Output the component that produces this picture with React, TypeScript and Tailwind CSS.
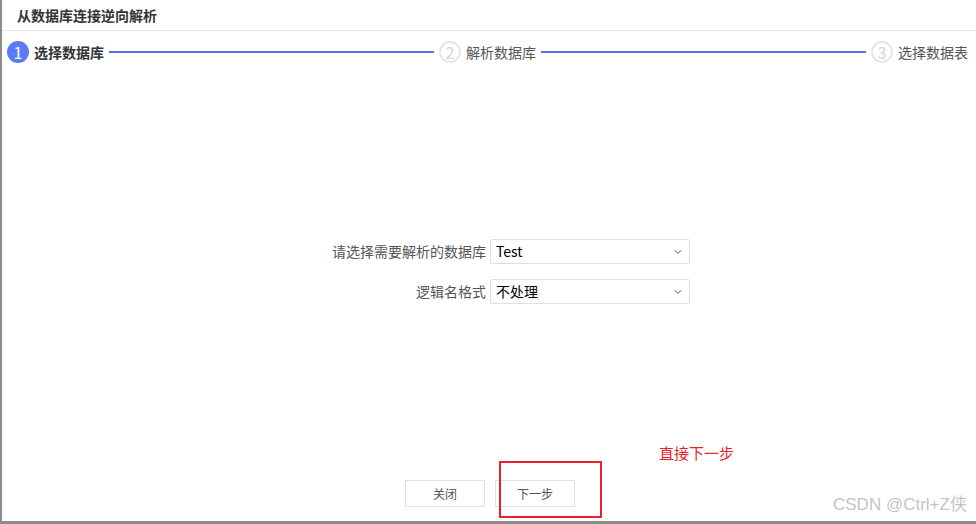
import { ChevronDown } from "lucide-react";

const font = { fontFamily: '"Microsoft YaHei", "Noto Sans CJK SC", "Liberation Sans", sans-serif' };

function Step(props: { n: number; label: string; active?: boolean }) {
  const { n, label, active } = props;
  return (
    <div className="flex items-center gap-[5px] shrink-0">
      <span
        className={
          "flex h-[22px] w-[22px] items-center justify-center rounded-full text-[16px] leading-none " +
          (active ? "bg-[#5a7cf8] text-white" : "border-2 border-[#e3e6ee] bg-white text-[#d2d5dc]")
        }
      >
        {n}
      </span>
      <span className={"text-[14px] " + (active ? "font-bold text-[#333]" : "text-[#555]")}>{label}</span>
    </div>
  );
}

function Field(props: { label: string; value: string }) {
  return (
    <div className="flex items-center">
      <div className="w-[164px] pr-[4px] text-right text-[14px] text-[#555]">{props.label}</div>
      <div className="flex h-[25px] w-[200px] items-center justify-between rounded-[2px] border border-[#dcdfe6] bg-white pl-[5px] pr-[5px] text-[14px] text-black">
        <span>{props.value}</span>
        <ChevronDown size={12} strokeWidth={2} className="text-[#555]" />
      </div>
    </div>
  );
}

export default function App() {
  return (
    <div className="h-[524px] w-[976px] overflow-hidden bg-[#8c8c8c] pl-[2px] pb-[3px]" style={font}>
      <div className="relative flex h-full flex-col bg-white">
        <div className="flex h-[31px] items-center border-b border-[#e4e6ee] pl-[15px] text-[14px] font-bold text-[#333]">
          从数据库连接逆向解析
        </div>
        <div className="flex h-[42px] items-center pl-[5px] pr-[8px]">
          <Step n={1} label="选择数据库" active />
          <div className="mx-[5px] h-[2px] flex-1 bg-[#4d70f0]" />
          <Step n={2} label="解析数据库" />
          <div className="mx-[5px] h-[2px] flex-1 bg-[#4d70f0]" />
          <Step n={3} label="选择数据表" />
        </div>
        <div className="flex flex-1 flex-col items-center pt-[166px] gap-[15px] pl-[38px]">
          <Field label="请选择需要解析的数据库" value="Test" />
          <Field label="逻辑名格式" value="不处理" />
        </div>
        <div className="flex justify-center gap-[10px] pb-[14px] pl-[2px]">
          <button className="h-[27px] w-[80px] border border-[#dde1e8] bg-white text-[12px] text-[#555]">关闭</button>
          <button className="h-[27px] w-[80px] border border-[#dde1e8] bg-white text-[12px] text-[#555]">下一步</button>
        </div>
        <div className="absolute left-[497px] top-[461px] h-[57px] w-[103px] border-2 border-[#e8212c]" />
        <div className="absolute left-[657px] top-[442px] text-[15px] text-[#e8212c]">直接下一步</div>
        <div className="absolute left-[831px] top-[492px] text-[17px] text-[#c4c4c4]" style={{ fontFamily: '"Liberation Sans", "Noto Sans CJK SC", sans-serif' }}>
          CSDN @Ctrl+Z侠
        </div>
      </div>
    </div>
  );
}
